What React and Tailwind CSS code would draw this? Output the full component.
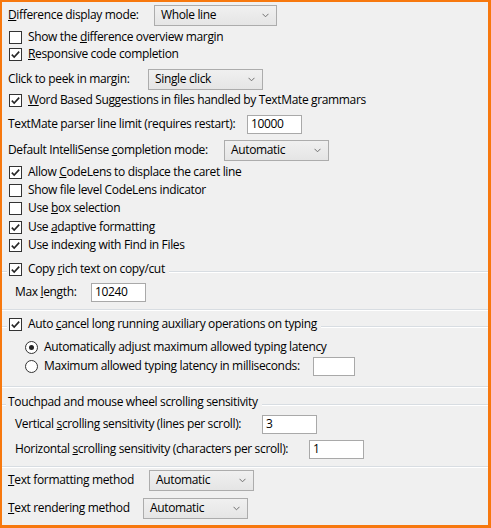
import React from "react";

const FONT = { fontFamily: '"Open Sans", "Noto Sans", sans-serif' };

function CheckBox({ checked }) {
  return (
    <span className="flex h-[13px] w-[13px] shrink-0 items-center justify-center border border-[#333333] bg-white">
      {checked ? (
        <svg width="11" height="11" viewBox="0 0 11 11">
          <path d="M1.8 5.6 L4.2 8 L9.2 2.6" fill="none" stroke="#262626" strokeWidth="1.6" />
        </svg>
      ) : null}
    </span>
  );
}

function Radio({ checked }) {
  return (
    <span className="flex h-[13px] w-[13px] shrink-0 items-center justify-center rounded-full border border-[#333333] bg-white">
      {checked ? <span className="h-[5px] w-[5px] rounded-full bg-[#222222]" /> : null}
    </span>
  );
}

function CheckRow({ checked, children, className = "" }) {
  return (
    <div className={`flex h-[16px] items-center pl-[7px] ${className}`}>
      <CheckBox checked={checked} />
      <span className="ml-[6px] whitespace-nowrap">{children}</span>
    </div>
  );
}

function Select({ value, width }) {
  return (
    <div
      className="flex h-[21px] shrink-0 items-center justify-between border border-[#acacac] bg-gradient-to-b from-[#f0f0f0] to-[#e5e5e5] pl-[6px] pr-[7px]"
      style={{ width }}
    >
      <span>{value}</span>
      <svg width="7" height="5" viewBox="0 0 7 5">
        <path d="M0.5 0.8 L3.5 3.8 L6.5 0.8" fill="none" stroke="#707070" strokeWidth="1" />
      </svg>
    </div>
  );
}

function Field({ value = "", width }) {
  return (
    <div
      className="flex h-[19px] shrink-0 items-center border border-[#a9a9a9] bg-white pl-[3px]"
      style={{ width }}
    >
      {value}
    </div>
  );
}

function Line({ className = "" }) {
  return (
    <div className={`mt-[5px] h-[2px] border-t border-[#d8dde2] bg-white ${className}`} />
  );
}

function Separator({ className = "" }) {
  return <div className={`h-[2px] border-t border-[#d8dde2] bg-white ${className}`} />;
}

export default function App() {
  return (
    <div
      className="h-[528px] w-[491px] overflow-hidden border-b-[3px] border-l-2 border-r-[3px] border-t-2 border-[#f7780e] bg-[#f0f0f0] text-[12px] leading-none tracking-[-0.35px] text-black"
      style={FONT}
    >
      <div className="mt-[2px] flex h-[22px] items-center pl-[6px]">
        <span className="w-[146px] whitespace-nowrap">
          <u>D</u>ifference display mode:
        </span>
        <Select value="Whole line" width={123} />
      </div>

      <CheckRow className="mt-[3px]">
        Show the <u>d</u>ifference overview margin
      </CheckRow>
      <CheckRow checked className="mt-[1px]">
        <u>R</u>esponsive code completion
      </CheckRow>

      <div className="mt-[6px] flex h-[22px] items-center pl-[6px]">
        <span className="w-[140px] whitespace-nowrap">Click to peek in margin:</span>
        <Select value="Single click" width={115} />
      </div>

      <CheckRow checked className="mt-[2px]">
        <u>W</u>ord Based Suggestions in files handled by TextMate grammars
      </CheckRow>

      <div className="mt-[6px] flex h-[20px] items-center pl-[6px]">
        <span className="w-[239px] whitespace-nowrap">TextMate parser line limit (requires restart):</span>
        <Field value="10000" width={55} />
      </div>

      <div className="mt-[5px] flex h-[22px] items-center pl-[6px]">
        <span className="w-[216px] whitespace-nowrap">
          Default IntelliSense <u>c</u>ompletion mode:
        </span>
        <Select value="Automatic" width={105} />
      </div>

      <CheckRow checked className="mt-[3px]">
        Allow <u>C</u>odeLens to displace the caret line
      </CheckRow>
      <CheckRow className="mt-[2px]">Show file level CodeLens indicator</CheckRow>
      <CheckRow className="mt-[2px]">
        Use <u>b</u>ox selection
      </CheckRow>
      <CheckRow checked className="mt-[3px]">
        Use <u>a</u>daptive formatting
      </CheckRow>
      <CheckRow checked className="mt-[2px]">
        Use indexing with Find in Files
      </CheckRow>

      <div className="mt-[8px] flex h-[16px] items-center">
        <Line className="w-[5px]" />
        <div className="flex items-center pl-[2px] pr-[4px]">
          <CheckBox checked />
          <span className="ml-[6px] whitespace-nowrap">
            Copy <u>r</u>ich text on copy/cut
          </span>
        </div>
        <Line className="flex-1" />
      </div>

      <div className="mt-[5px] flex h-[20px] items-center pl-[13px]">
        <span className="w-[76px] whitespace-nowrap">
          Max <u>l</u>ength:
        </span>
        <Field value="10240" width={55} />
      </div>

      <Separator className="mt-[7px]" />

      <div className="mt-[5px] flex h-[16px] items-center">
        <Line className="w-[5px]" />
        <div className="flex items-center pl-[2px] pr-[4px]">
          <CheckBox checked />
          <span className="ml-[6px] whitespace-nowrap">
            Auto <u>c</u>ancel long running auxiliary operations on typing
          </span>
        </div>
        <Line className="flex-1" />
      </div>

      <div className="mt-[7px] flex h-[16px] items-center pl-[23px]">
        <Radio checked />
        <span className="ml-[6px] whitespace-nowrap">Automatically adjust maximum allowed typing latency</span>
      </div>

      <div className="mt-[1px] flex h-[20px] items-center pl-[23px]">
        <Radio />
        <span className="ml-[6px] w-[269px] whitespace-nowrap">Maximum allowed typing latency in milliseconds:</span>
        <Field width={42} />
      </div>

      <Separator className="mt-[10px]" />

      <div className="mt-[6px] flex h-[16px] items-center">
        <Line className="w-[4px]" />
        <span className="whitespace-nowrap pl-[2px] pr-[4px]">Touchpad and mouse wheel scrolling sensitivity</span>
        <Line className="flex-1" />
      </div>

      <div className="mt-[4px] flex h-[20px] items-center pl-[13px]">
        <span className="w-[247px] whitespace-nowrap">
          Vertical <u>s</u>crolling sensitivity (lines per scroll):
        </span>
        <Field value="3" width={55} />
      </div>

      <div className="mt-[5px] flex h-[20px] items-center pl-[13px]">
        <span className="w-[294px] whitespace-nowrap">
          Horizontal <u>s</u>crolling sensitivity (characters per scroll):
        </span>
        <Field value="1" width={55} />
      </div>

      <Separator className="mt-[7px]" />

      <div className="mt-[1px] flex h-[22px] items-center pl-[6px]">
        <span className="w-[141px] whitespace-nowrap">
          <u>T</u>ext formatting method
        </span>
        <Select value="Automatic" width={105} />
      </div>

      <div className="mt-[6px] flex h-[22px] items-center pl-[6px]">
        <span className="w-[135px] whitespace-nowrap">
          <u>T</u>ext rendering method
        </span>
        <Select value="Automatic" width={105} />
      </div>
    </div>
  );
}
